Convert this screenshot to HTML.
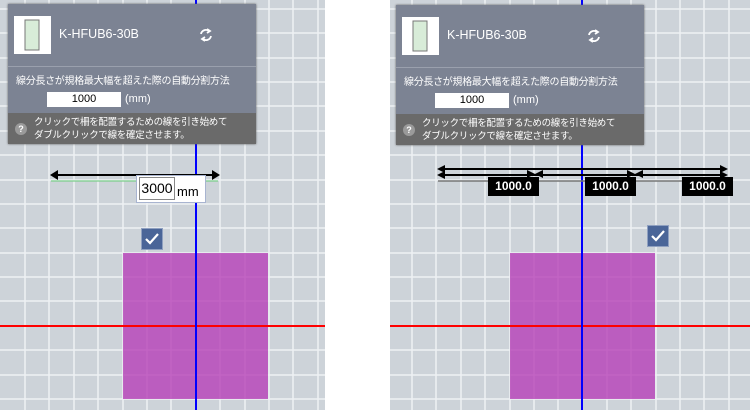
<!DOCTYPE html>
<html><head><meta charset="utf-8"><style>
body{margin:0;width:750px;height:410px;background:#fff;position:relative;overflow:hidden;font-family:"Liberation Sans","Noto Sans CJK JP",sans-serif}
.p{position:absolute;top:0;height:410px;overflow:hidden;background:#cdd3d9}
.dlg{position:absolute;top:4px;width:248px;height:140px;background:#7c8393;box-shadow:0 0 2px #555;white-space:nowrap}
.thumb{position:absolute;left:6px;top:12px;width:37px;height:38px;background:#fff}
.title{position:absolute;left:51px;top:23px;color:#fff;font-size:12.5px}
.sep{position:absolute;left:0;right:0;top:62px;height:1px;background:#9aa0ad}
.lbl{position:absolute;left:8px;top:68px;color:#fff;font-size:10px;letter-spacing:-0.3px}
.inp{position:absolute;left:39px;top:88px;width:74px;height:15px;background:#fff;font-size:11px;text-align:center;line-height:15px}
.mm{position:absolute;left:117px;top:89px;color:#fff;font-size:11px}
.help{position:absolute;left:0;right:0;top:109px;height:31px;background:#6a6a6a;color:#fff;font-size:9.5px}
.help .q{position:absolute;left:7px;top:10px;width:12px;height:12px;border-radius:6px;background:#9a9a9a;font-size:9px;text-align:center;line-height:12px;font-weight:bold}
.help .t{position:absolute;left:26px;top:3px;line-height:13px;letter-spacing:-0.3px}
.chk{position:absolute;width:20px;height:20px;background:#4a6598;border:1px solid #8fa0c0}
.tag{position:absolute;background:#000;color:#fff;font-weight:bold;font-size:12px;height:19px;line-height:19px;width:51px;text-align:center}
</style></head><body>

<div class="p" style="left:0;width:325px">
<svg width="325" height="410" style="position:absolute;left:0;top:0">
<g stroke="#eef1f4" stroke-width="1.5">
<line x1="0" y1="9" x2="325" y2="9"/><line x1="0" y1="33" x2="325" y2="33"/><line x1="0" y1="58" x2="325" y2="58"/><line x1="0" y1="82" x2="325" y2="82"/><line x1="0" y1="106" x2="325" y2="106"/><line x1="0" y1="131" x2="325" y2="131"/><line x1="0" y1="155" x2="325" y2="155"/><line x1="0" y1="180" x2="325" y2="180"/><line x1="0" y1="204" x2="325" y2="204"/><line x1="0" y1="228" x2="325" y2="228"/><line x1="0" y1="253" x2="325" y2="253"/><line x1="0" y1="277" x2="325" y2="277"/><line x1="0" y1="301" x2="325" y2="301"/><line x1="0" y1="350" x2="325" y2="350"/><line x1="0" y1="375" x2="325" y2="375"/><line x1="0" y1="399" x2="325" y2="399"/>
<line x1="25" y1="0" x2="25" y2="410"/><line x1="49" y1="0" x2="49" y2="410"/><line x1="74" y1="0" x2="74" y2="410"/><line x1="98" y1="0" x2="98" y2="410"/><line x1="123" y1="0" x2="123" y2="410"/><line x1="147" y1="0" x2="147" y2="410"/><line x1="171" y1="0" x2="171" y2="410"/><line x1="220" y1="0" x2="220" y2="410"/><line x1="245" y1="0" x2="245" y2="410"/><line x1="269" y1="0" x2="269" y2="410"/><line x1="293" y1="0" x2="293" y2="410"/><line x1="318" y1="0" x2="318" y2="410"/>
</g>
<rect x="123" y="253" width="145" height="146" fill="#b640b8" opacity="0.8"/>
<line x1="0" y1="326" x2="325" y2="326" stroke="#f00" stroke-width="2"/>
<line x1="196" y1="0" x2="196" y2="410" stroke="#00f" stroke-width="2"/>
<line x1="51" y1="181" x2="218" y2="181" stroke="#7ccf8a" stroke-width="1.2"/>
<line x1="56" y1="175" x2="214" y2="175" stroke="#000" stroke-width="2"/>
<path d="M50 175 L58 170 L58 180Z M220 175 L212 170 L212 180Z" fill="#000"/>
</svg>
<div style="position:absolute;left:136px;top:175px;width:68px;height:26px;background:#fff;border:1px solid #a8b4d0"></div>
<div style="position:absolute;left:139px;top:177px;width:34px;height:21px;border:1px solid #888;font-size:14px;line-height:21px;text-align:center">3000</div>
<div style="position:absolute;left:177px;top:184px;font-size:13px">mm</div>
<div class="chk" style="left:141px;top:228px"><svg width="20" height="20"><path d="M4 10 L8 14 L16 5" stroke="#fff" stroke-width="2.2" fill="none"/></svg></div>
<div class="dlg" style="left:8px">
 <div class="thumb"><svg width="37" height="38"><rect x="11" y="4" width="14" height="30" fill="#d8ecd8" stroke="#777"/></svg></div>
 <div class="title">K-HFUB6-30B</div>
 <svg style="position:absolute;left:190px;top:23px" width="16" height="16"><path d="M3 7 A5 5 0 0 1 11 4 M9 2 L12 4 L9 6 M13 9 A5 5 0 0 1 5 12 M7 10 L4 12 L7 14" stroke="#fff" stroke-width="1.8" fill="none"/></svg>
 <div class="sep"></div>
 <div class="lbl">線分長さが規格最大幅を超えた際の自動分割方法</div>
 <div class="inp">1000</div><div class="mm">(mm)</div>
 <div class="help"><div class="q">?</div><div class="t">クリックで柵を配置するための線を引き始めて<br>ダブルクリックで線を確定させます。</div></div>
</div>
</div>

<div class="p" style="left:390px;width:360px">
<svg width="360" height="410" style="position:absolute;left:0;top:0">
<g stroke="#eef1f4" stroke-width="1.5">
<line x1="0" y1="9" x2="360" y2="9"/><line x1="0" y1="33" x2="360" y2="33"/><line x1="0" y1="58" x2="360" y2="58"/><line x1="0" y1="82" x2="360" y2="82"/><line x1="0" y1="106" x2="360" y2="106"/><line x1="0" y1="131" x2="360" y2="131"/><line x1="0" y1="155" x2="360" y2="155"/><line x1="0" y1="180" x2="360" y2="180"/><line x1="0" y1="204" x2="360" y2="204"/><line x1="0" y1="228" x2="360" y2="228"/><line x1="0" y1="253" x2="360" y2="253"/><line x1="0" y1="277" x2="360" y2="277"/><line x1="0" y1="301" x2="360" y2="301"/><line x1="0" y1="350" x2="360" y2="350"/><line x1="0" y1="375" x2="360" y2="375"/><line x1="0" y1="399" x2="360" y2="399"/>
<line x1="22" y1="0" x2="22" y2="410"/><line x1="46" y1="0" x2="46" y2="410"/><line x1="71" y1="0" x2="71" y2="410"/><line x1="95" y1="0" x2="95" y2="410"/><line x1="120" y1="0" x2="120" y2="410"/><line x1="144" y1="0" x2="144" y2="410"/><line x1="168" y1="0" x2="168" y2="410"/><line x1="217" y1="0" x2="217" y2="410"/><line x1="241" y1="0" x2="241" y2="410"/><line x1="266" y1="0" x2="266" y2="410"/><line x1="290" y1="0" x2="290" y2="410"/><line x1="314" y1="0" x2="314" y2="410"/><line x1="339" y1="0" x2="339" y2="410"/>
</g>
<rect x="120" y="253" width="145" height="146" fill="#b640b8" opacity="0.8"/>
<line x1="0" y1="326" x2="360" y2="326" stroke="#f00" stroke-width="2"/>
<line x1="192" y1="0" x2="192" y2="410" stroke="#00f" stroke-width="2"/>
<line x1="48" y1="181" x2="338" y2="181" stroke="#777" stroke-width="1.5"/>
<line x1="52" y1="169" x2="334" y2="169" stroke="#000" stroke-width="2"/>
<line x1="52" y1="175" x2="334" y2="175" stroke="#000" stroke-width="2"/>
<path d="M47 169 L55 165 L55 173Z M47 175 L55 171 L55 179Z M338 169 L330 165 L330 173Z M338 175 L330 171 L330 179Z M145 174 L137 170 L137 178Z M145 174 L153 170 L153 178Z M245 174 L237 170 L237 178Z M245 174 L253 170 L253 178Z" fill="#000"/>
</svg>
<div class="tag" style="left:98px;top:177px">1000.0</div>
<div class="tag" style="left:195px;top:177px">1000.0</div>
<div class="tag" style="left:292px;top:177px">1000.0</div>
<div class="chk" style="left:257px;top:225px"><svg width="20" height="20"><path d="M4 10 L8 14 L16 5" stroke="#fff" stroke-width="2.2" fill="none"/></svg></div>
<div class="dlg" style="left:6px;top:5px">
 <div class="thumb"><svg width="37" height="38"><rect x="11" y="4" width="14" height="30" fill="#d8ecd8" stroke="#777"/></svg></div>
 <div class="title">K-HFUB6-30B</div>
 <svg style="position:absolute;left:190px;top:23px" width="16" height="16"><path d="M3 7 A5 5 0 0 1 11 4 M9 2 L12 4 L9 6 M13 9 A5 5 0 0 1 5 12 M7 10 L4 12 L7 14" stroke="#fff" stroke-width="1.8" fill="none"/></svg>
 <div class="sep"></div>
 <div class="lbl">線分長さが規格最大幅を超えた際の自動分割方法</div>
 <div class="inp">1000</div><div class="mm">(mm)</div>
 <div class="help"><div class="q">?</div><div class="t">クリックで柵を配置するための線を引き始めて<br>ダブルクリックで線を確定させます。</div></div>
</div>
</div>
</body></html>
